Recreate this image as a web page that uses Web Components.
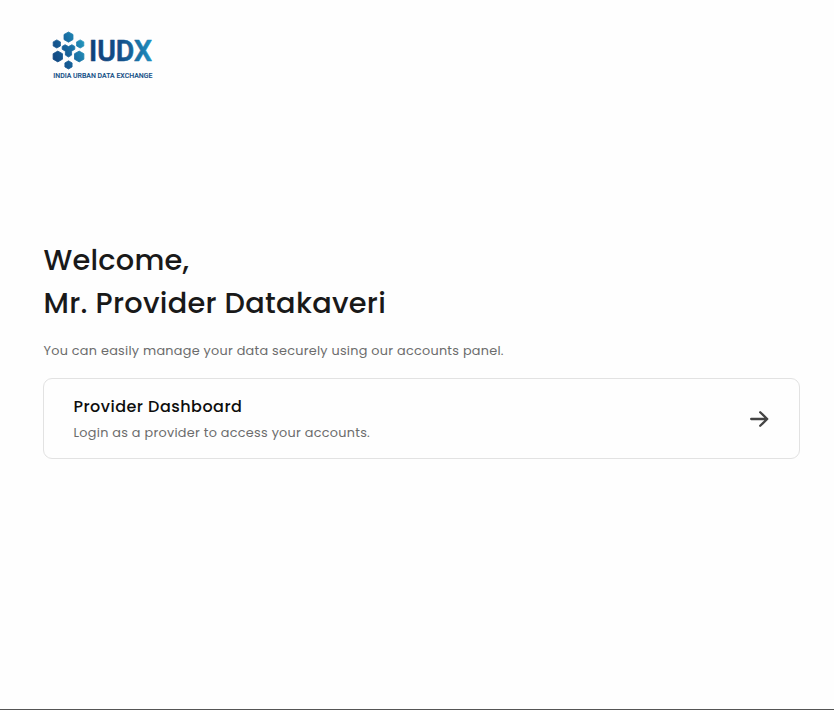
<!DOCTYPE html>
<html lang="en">
<head>
<meta charset="utf-8">
<title>IUDX Accounts</title>
<style>
body{margin:0;background:#fefefe;font-family:Poppins,Inter,"Open Sans",sans-serif;color:#191919}
h1,h2,p{margin:0}
h1{font-size:28.8px;line-height:43.2px;font-weight:500;margin-bottom:14px}
h2{font-size:16px;line-height:24px;font-weight:500;color:#0d0d0d}
p{font-size:12.8px;line-height:24px;color:#6c6c6c}
</style>
</head>
<body>
<welcome-page>
  <iudx-logo slot="logo"></iudx-logo>
  <h1 slot="title"><fit-line width="145.5">Welcome,</fit-line><fit-line width="342.3">Mr. Provider Datakaveri</fit-line></h1>
  <p slot="intro"><fit-line width="460">You can easily manage your data securely using our accounts panel.</fit-line></p>
  <account-card>
    <h2 slot="heading"><fit-line width="168.4">Provider Dashboard</fit-line></h2>
    <p slot="text"><fit-line width="296.3">Login as a provider to access your accounts.</fit-line></p>
  </account-card>
</welcome-page>
<script>
class FitLine extends HTMLElement{
  connectedCallback(){
    this.attachShadow({mode:'open'}).innerHTML=`<style>:host{display:block;padding-left:.5px;white-space:nowrap}span{display:inline-block}</style><span><slot></slot></span>`;
    requestAnimationFrame(()=>this.fit());
  }
  // Spreads the letters so that the line fills its nominal width.
  fit(){
    const span=this.shadowRoot.querySelector('span');
    const n=this.textContent.length;
    span.style.letterSpacing='0px';
    const natural=span.getBoundingClientRect().width;
    span.style.letterSpacing=((Number(this.getAttribute('width'))-natural)/(n-1))+'px';
  }
}
class IudxLogo extends HTMLElement{
  connectedCallback(){
    this.attachShadow({mode:'open'}).innerHTML=`
<style>:host{display:block;width:140px;height:76px}svg{display:block;overflow:visible}text{font-family:Roboto,sans-serif}</style>
<svg width="140" height="76" viewBox="44 24 140 76" role="img" aria-label="IUDX">
<defs>
<linearGradient id="m" gradientUnits="userSpaceOnUse" x1="52" y1="58" x2="85" y2="44"><stop offset="0" stop-color="#12457f"/><stop offset=".5" stop-color="#17659d"/><stop offset="1" stop-color="#2396bd"/></linearGradient>
<linearGradient id="w" gradientUnits="userSpaceOnUse" x1="90" y1="0" x2="153" y2="0"><stop offset="0" stop-color="#114079"/><stop offset=".5" stop-color="#134f89"/><stop offset="1" stop-color="#1d8fbf"/></linearGradient>
</defs>
<g fill="url(#m)" stroke="url(#m)" stroke-width=".8" stroke-linejoin="round">
<path d="M68.5 32 73 34.5V39.6L68.5 42.2 64 39.6V34.5Z"/>
<path d="M56.8 39.9 60.4 41.9V46L56.8 48 53.2 46V41.9Z"/>
<path d="M80.2 39.9 83.8 41.9V46L80.2 48 76.6 46V41.9Z"/>
<path d="M57.8 51.1 62.5 53.7V59.2L57.8 61.9 53.1 59.2V53.7Z"/>
<path d="M79.2 51.1 83.9 53.7V59.2L79.2 61.9 74.5 59.2V53.7Z"/>
<path d="M68.5 60.8 72.1 62.9V66.9L68.5 69 64.9 66.9V62.9Z"/>
<path d="M65.1 44.7 68.5 46.6 71.9 44.7 74.8 46.4V49.3L71.6 51.2V55.1L68.5 57 65.4 55.1V51.2L62.2 49.3V46.4Z"/>
</g>
<text x="89" y="61.5" font-size="28.9" font-weight="600" textLength="64" lengthAdjust="spacing" fill="url(#w)" stroke="url(#w)" stroke-width=".5" stroke-linejoin="round" transform="translate(89 0) scale(.985 1) translate(-89 0)">IUDX</text>
<text x="53.3" y="78" font-size="6.9" font-weight="500" textLength="99" lengthAdjust="spacingAndGlyphs" fill="#155087" stroke="#155087" stroke-width=".12">INDIA URBAN DATA EXCHANGE</text>
</svg>`;
  }
}
class AccountCard extends HTMLElement{
  connectedCallback(){
    this.attachShadow({mode:'open'}).innerHTML=`
<style>
:host{display:flex;box-sizing:border-box;align-items:center;justify-content:space-between;height:81px;margin-top:15px;padding:0 30px 0 29px;border:1px solid #e2e2e2;border-radius:9px;background:#fefefe}
.copy{display:grid;row-gap:2px;padding-top:2px}
svg{display:block;width:20px;height:20px}
</style>
<div class="copy"><slot name="heading"></slot><slot name="text"></slot></div>
<svg viewBox="0 0 20 20" fill="none" stroke="#444" stroke-width="2.3" stroke-linecap="round" stroke-linejoin="round"><path d="M2.2 10H18.2M11.2 3.2 18.2 10 11.2 16.8"/></svg>`;
  }
}
class WelcomePage extends HTMLElement{
  connectedCallback(){
    this.attachShadow({mode:'open'}).innerHTML=`
<style>
:host{display:flex;flex-direction:column;box-sizing:border-box;height:710px;padding:24px 34px 0 43px;border-bottom:1px solid #555}
header{padding-left:1px;height:215px}
</style>
<header><slot name="logo"></slot></header>
<slot name="title"></slot><slot name="intro"></slot><slot></slot>`;
  }
}
customElements.define('fit-line',FitLine);
customElements.define('iudx-logo',IudxLogo);
customElements.define('account-card',AccountCard);
customElements.define('welcome-page',WelcomePage);
</script>
</body>
</html>
